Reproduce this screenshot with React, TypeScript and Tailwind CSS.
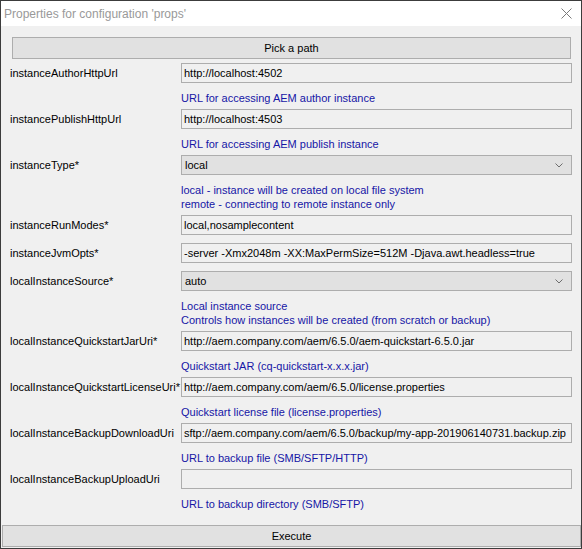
import React from 'react';

type Field = {
  label: string;
  value: string;
  select?: boolean;
  hint?: string[];
};

const fields: Field[] = [
  { label: 'instanceAuthorHttpUrl', value: 'http://localhost:4502', hint: ['URL for accessing AEM author instance'] },
  { label: 'instancePublishHttpUrl', value: 'http://localhost:4503', hint: ['URL for accessing AEM publish instance'] },
  {
    label: 'instanceType*',
    value: 'local',
    select: true,
    hint: ['local - instance will be created on local file system', 'remote - connecting to remote instance only'],
  },
  { label: 'instanceRunModes*', value: 'local,nosamplecontent' },
  { label: 'instanceJvmOpts*', value: '-server -Xmx2048m -XX:MaxPermSize=512M -Djava.awt.headless=true' },
  {
    label: 'localInstanceSource*',
    value: 'auto',
    select: true,
    hint: ['Local instance source', 'Controls how instances will be created (from scratch or backup)'],
  },
  {
    label: 'localInstanceQuickstartJarUri*',
    value: 'http://aem.company.com/aem/6.5.0/aem-quickstart-6.5.0.jar',
    hint: ['Quickstart JAR (cq-quickstart-x.x.x.jar)'],
  },
  {
    label: 'localInstanceQuickstartLicenseUri*',
    value: 'http://aem.company.com/aem/6.5.0/license.properties',
    hint: ['Quickstart license file (license.properties)'],
  },
  {
    label: 'localInstanceBackupDownloadUri',
    value: 'sftp://aem.company.com/aem/6.5.0/backup/my-app-201906140731.backup.zip',
    hint: ['URL to backup file (SMB/SFTP/HTTP)'],
  },
  { label: 'localInstanceBackupUploadUri', value: '', hint: ['URL to backup directory (SMB/SFTP)'] },
];

const Chevron = () => (
  <svg width="8" height="5" viewBox="0 0 8 5" className="shrink-0">
    <polyline points="0.5,0.5 4,4 7.5,0.5" fill="none" stroke="#6d6d6d" strokeWidth="1" />
  </svg>
);

const FieldRow: React.FC<{ f: Field }> = ({ f }) => (
  <div className="flex flex-col">
    <div className="flex items-center pl-[9px] pr-[9px]">
      <div className="w-[171px] text-black whitespace-nowrap">{f.label}</div>
      {f.select ? (
        <div className="w-[391px] h-[20px] border border-[#adadad] bg-[#e1e1e1] flex items-center pl-[3px] pr-[8px]">
          <span className="flex-1">{f.value}</span>
          <Chevron />
        </div>
      ) : (
        <div className="w-[391px] h-[20px] border border-[#adadad] bg-[#f0f0f0] flex items-center pl-[2px] whitespace-nowrap overflow-hidden">
          {f.value}
        </div>
      )}
    </div>
    {f.hint && (
      <div className="mt-[8px] mb-[-4px] ml-[180px] leading-[14px] text-[#1616a6]">
        {f.hint.map((h) => (
          <div key={h}>{h}</div>
        ))}
      </div>
    )}
  </div>
);

const App: React.FC = () => {
  return (
    <div
      className="w-[582px] h-[549px] border border-[#3c3c3c] bg-[#f0f0f0] flex flex-col text-[11px] text-black"
      style={{ fontFamily: '"Liberation Sans", Arial, sans-serif' }}
    >
      <div className="h-[25px] bg-white flex items-center justify-between pl-[3px] pr-[9px] shrink-0">
        <span className="text-[12px] text-[#999999]">Properties for configuration 'props'</span>
        <svg width="11" height="11" viewBox="0 0 11 11">
          <path d="M0.5 0.5 L10.5 10.5 M10.5 0.5 L0.5 10.5" stroke="#7a7a7a" strokeWidth="1" />
        </svg>
      </div>

      <button className="mt-[11px] ml-[11px] w-[559px] h-[22px] border border-[#adadad] bg-[#e1e1e1] flex items-center justify-center shrink-0">
        Pick a path
      </button>

      <div className="mt-[4px] flex flex-col gap-2">
        {fields.map((f) => (
          <FieldRow key={f.label} f={f} />
        ))}
      </div>

      <div className="flex-1" />

      <button className="ml-[1px] mb-[1px] h-[22px] border border-[#adadad] bg-[#e1e1e1] flex items-center justify-center shrink-0">
        Execute
      </button>
    </div>
  );
};

export default App;
